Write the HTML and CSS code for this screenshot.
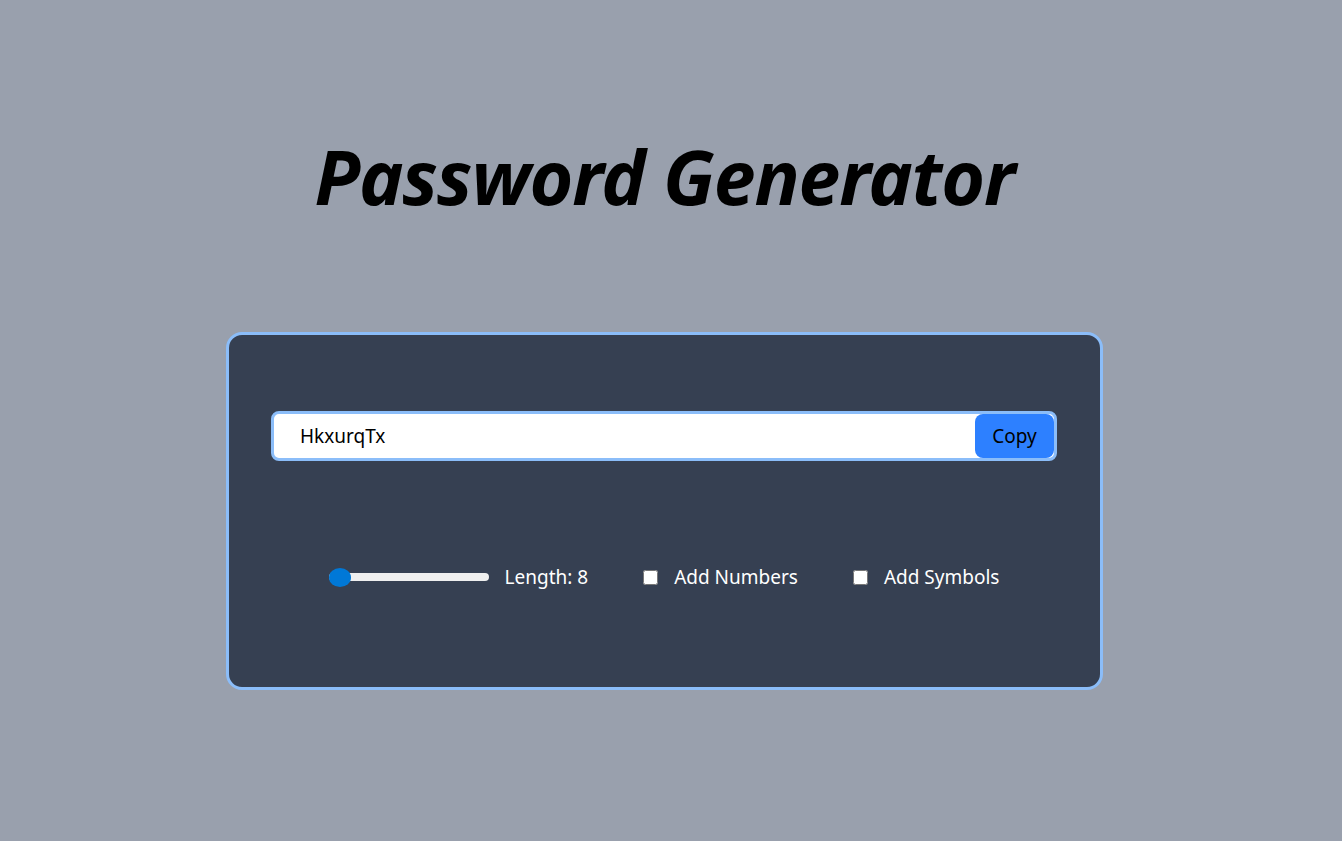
FILE: index.html
```html
<!DOCTYPE html>
<html lang="en">
<head>
<meta charset="utf-8">
<title>Password Generator</title>
<link rel="stylesheet" href="styles.css">
</head>
<body>
<main class="page">
  <h1 class="title">Password Generator</h1>
  <section class="card">
    <div class="output">
      <input class="output-field" type="text" value="HkxurqTx" readonly>
      <button class="copy-btn" type="button">Copy</button>
    </div>
    <div class="controls">
      <div class="control">
        <input class="range" type="range" min="8" max="100" value="8">
        <label class="label">Length: 8</label>
      </div>
      <div class="control">
        <input class="check" type="checkbox" id="num">
        <label class="label" for="num">Add Numbers</label>
      </div>
      <div class="control">
        <input class="check" type="checkbox" id="sym">
        <label class="label" for="sym">Add Symbols</label>
      </div>
    </div>
  </section>
</main>
</body>
</html>
```
FILE: styles.css
```css
* { box-sizing: border-box; }
html, body { margin: 0; padding: 0; }
body {
  background: #99a0ad;
  font-family: "Noto Sans", "Open Sans", sans-serif;
  height: 841px;
  overflow: hidden;
}
.page {
  display: flex;
  flex-direction: column;
  align-items: center;
  padding-right: 13px;
}
.title {
  margin: 126px 0 0 0;
  font-size: 75px;
  line-height: 100px;
  font-weight: 700;
  font-style: italic;
  color: #000;
  letter-spacing: -1.1px;
}
.card {
  margin-top: 106px;
  width: 877px;
  height: 358px;
  background: #364052;
  border: 3px solid #8bbdf9;
  border-radius: 16px;
  padding: 76px 43px 0 42px;
  display: flex;
  flex-direction: column;
  gap: 101px;
}
.output {
  display: flex;
  height: 50px;
  border: 3px solid #8bbdf9;
  border-radius: 8px;
  background: #fff;
  overflow: hidden;
}
.output-field {
  flex: 1;
  border: none;
  outline: none;
  background: transparent;
  font-family: inherit;
  font-size: 19px;
  color: #000;
  padding: 0 0 0 26px;
  min-width: 0;
}
.copy-btn {
  width: 79px;
  height: 44px;
  border: none;
  border-radius: 8px;
  background: #2d80ff;
  color: #000;
  font-family: inherit;
  font-size: 19px;
  padding: 0;
  cursor: pointer;
}
.controls {
  display: flex;
  justify-content: center;
  align-items: center;
  gap: 55px;
  height: 30px;
}
.control {
  display: flex;
  align-items: center;
  gap: 16px;
}
.range {
  -webkit-appearance: none;
  appearance: none;
  width: 160px;
  height: 8px;
  margin: 0;
  border-radius: 4px;
  background: #efefef;
  outline: none;
}
.range::-webkit-slider-thumb {
  -webkit-appearance: none;
  appearance: none;
  width: 22px;
  height: 19px;
  border-radius: 50%;
  background: #0078d7;
  border: none;
}
.check {
  width: 15px;
  height: 15px;
  margin: 0;
}
.label {
  color: #fff;
  font-size: 19px;
}
```
